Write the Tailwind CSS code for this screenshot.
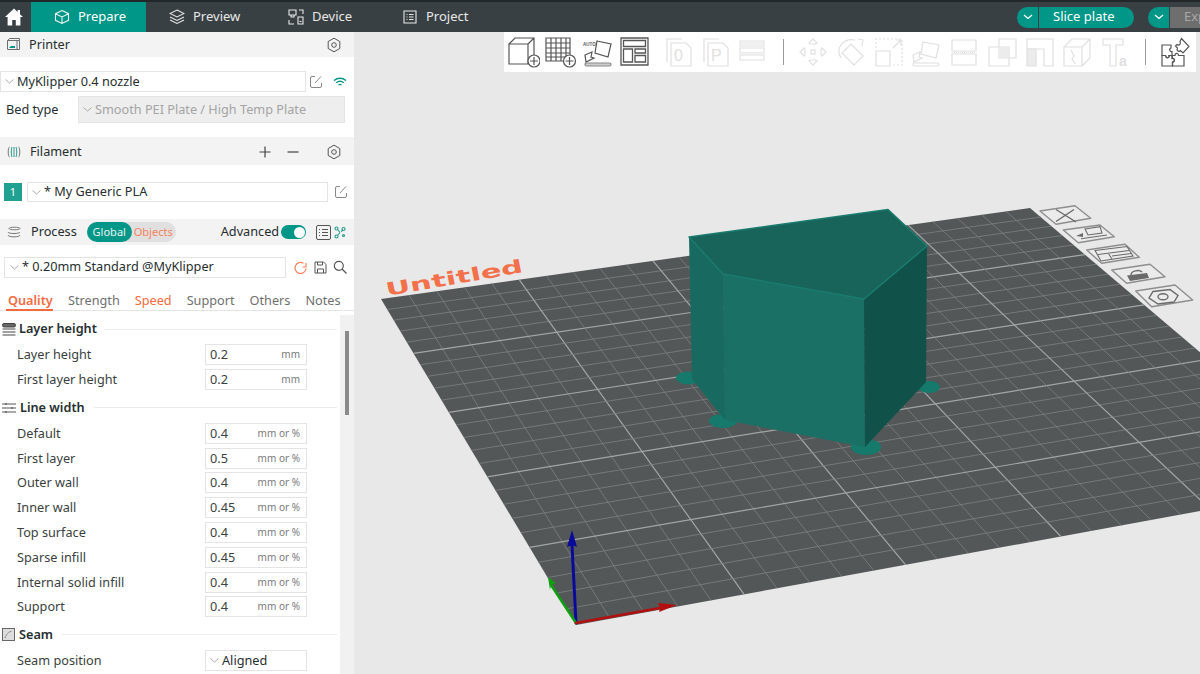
<!DOCTYPE html>
<html>
<head>
<meta charset="utf-8">
<script src="https://cdn.jsdelivr.net/npm/@tailwindcss/browser@4"></script>
</head>
<body class="m-0 overflow-hidden">
<div class="w-[1200px] h-[674px] flex flex-col overflow-hidden font-['Noto_Sans',sans-serif] text-[#262e30] bg-[#e8e8e8]">
  <!-- top bar -->
  <header class="h-[32px] shrink-0 bg-[#394043] border-t-2 border-[#22282a] flex items-center text-[13px] text-[#e8e8e8]">
    <div class="w-[31px] flex justify-center pr-[4px]">
      <svg class="w-[20px] h-[20px]" viewBox="0 0 20 20"><path fill="#fff" d="M10 1.500 1 10h2.600v8.500h4.600v-5.600h3.600v5.600h4.600V10H19l-3-2.800V3h-2.400v2z"/></svg>
    </div>
    <div class="w-[115px] h-full bg-[#009688] flex items-center pl-[23px] gap-[8px] text-white">
      <svg class="w-[16px] h-[16px]" viewBox="0 0 16 16" fill="none" stroke="#e8f5f2" stroke-width="1.100"><path d="M8 1.500 14.500 4.700v6.600L8 14.500 1.500 11.300V4.700zM1.500 4.700 8 8l6.500-3.300M8 8v6.500"/></svg>
      <span>Prepare</span>
    </div>
    <div class="w-[118px] flex items-center pl-[23px] gap-[8px]">
      <svg class="w-[16px] h-[16px]" viewBox="0 0 16 16" fill="none" stroke="#e8e8e8" stroke-width="1.100"><path d="M8 1 15 4.500 8 8 1 4.500zM1 8l7 3.500L15 8M1 11l7 3.500 7-3.500"/></svg>
      <span>Preview</span>
    </div>
    <div class="w-[115px] flex items-center pl-[24px] gap-[8px]">
      <svg class="w-[16px] h-[16px]" viewBox="0 0 16 16" fill="none" stroke="#e8e8e8" stroke-width="1.100"><path d="M1 1h7v5H1zM3 6v2h3V6M10 8h5v7h-5zM11.500 12.500h2M1 11v4h5M11 1h4v4"/></svg>
      <span>Device</span>
    </div>
    <div class="flex items-center pl-[23px] gap-[8px]">
      <svg class="w-[16px] h-[16px]" viewBox="0 0 16 16" fill="none" stroke="#e8e8e8" stroke-width="1.100"><path d="M2 2h12v12H2zM4.500 5.500h1M7 5.500h4.500M4.500 8h1M7 8h4.500M4.500 10.500h1M7 10.500h4.500"/></svg>
      <span>Project</span>
    </div>
    <div class="ml-auto flex items-center h-[21px]">
      <div class="flex h-full w-[117px] rounded-full overflow-hidden bg-[#009688] text-white">
        <div class="w-[22px] flex items-center justify-center border-r border-[#394043]">
          <svg class="w-[10px] h-[6px]" viewBox="0 0 10 6" fill="none" stroke="#fff" stroke-width="1.300"><path d="m1 1 4 3.500L9 1"/></svg>
        </div>
        <div class="flex-1 flex items-center pl-[14px]">Slice plate</div>
      </div>
      <div class="ml-[14px] flex h-full w-[52px] rounded-l-full overflow-hidden">
        <div class="w-[22px] flex items-center justify-center bg-[#009688] border-r border-[#394043]">
          <svg class="w-[10px] h-[6px]" viewBox="0 0 10 6" fill="none" stroke="#fff" stroke-width="1.300"><path d="m1 1 4 3.500L9 1"/></svg>
        </div>
        <div class="flex-1 bg-[#6e6e6e] text-[#a8a8a8] flex items-center pl-[14px] overflow-hidden">Export</div>
      </div>
    </div>
  </header>

  <div class="flex-1 flex min-h-0">
    <!-- sidebar -->
    <aside class="w-[354px] shrink-0 bg-white flex flex-col text-[12.7px] overflow-hidden">
      <div class="h-[25px] bg-[#f3f3f3] flex items-center pl-[6px] pr-[12px]">
        <svg class="w-[15px] h-[15px]" viewBox="0 0 15 15" fill="none" stroke="#6b6f70"><path d="M1.500 3.500h12v9h-12zM1.500 3.500l2-2h10v2M11 3.500v9"/><path fill="#009688" stroke="none" d="M3 11h6V9H5z"/></svg>
        <span class="ml-[8px]">Printer</span>
        <svg class="ml-auto w-[16px] h-[16px]" viewBox="0 0 16 16" fill="none" stroke="#555"><path d="M8 1.200 13.800 4.500v7L8 14.800 2.200 11.500v-7z" stroke-linejoin="round"/><circle cx="8" cy="8" r="2.300"/></svg>
      </div>
      <div class="h-[80px] relative">
        <div class="flex items-center pt-[14px]">
          <div class="w-[306px] h-[21px] border border-[#e4e4e4] flex items-center pl-[4px] gap-[3px]">
            <svg class="w-[9px] h-[5px]" viewBox="0 0 9 5" fill="none" stroke="#aaa"><path d="m.5.500 4 3.500 4-3.500"/></svg>
            <span>MyKlipper 0.4 nozzle</span>
          </div>
          <svg class="ml-[3px] w-[14px] h-[14px]" viewBox="0 0 14 14" fill="none" stroke="#888"><path d="M6 1.500H3a1.500 1.500 0 0 0-1.500 1.500v8A1.500 1.500 0 0 0 3 12.500h8a1.500 1.500 0 0 0 1.500-1.500V8M6 8l6-6.500"/></svg>
          <svg class="ml-[10px] w-[14px] h-[12px]" viewBox="0 0 14 12" fill="none" stroke="#009688" stroke-width="1.300"><path d="M1 4.500c3.500-3 8.500-3 12 0M3.200 6.800c2.200-1.800 5.400-1.800 7.600 0M5.500 9c1-.8 2-.8 3 0"/></svg>
        </div>
        <div class="flex items-center mt-[4px] pl-[6px]">
          <span class="w-[72px]">Bed type</span>
          <div class="w-[267px] h-[27px] bg-[#eeeeee] border border-[#e4e4e4] flex items-center pl-[4px] gap-[3px] text-[#a4a4a4]">
            <svg class="w-[9px] h-[5px]" viewBox="0 0 9 5" fill="none" stroke="#aaa"><path d="m.5.500 4 3.500 4-3.500"/></svg>
            <span>Smooth PEI Plate / High Temp Plate</span>
          </div>
        </div>
      </div>
      <div class="h-[28px] bg-[#f3f3f3] flex items-center pl-[7px] pr-[12px] pt-[1px]">
        <svg class="w-[14px] h-[14px]" viewBox="0 0 14 14" fill="none" stroke="#777"><path d="M2.500 2C.8 2 .8 12 2.500 12M11.500 2c1.700 0 1.700 10 0 10"/><path stroke="#2a9d8f" d="M5 2C4 4 4 10 5 12M7 2v10M9 2c1 2 1 8 0 10"/></svg>
        <span class="ml-[9px]">Filament</span>
        <svg class="ml-auto w-[12px] h-[12px]" viewBox="0 0 12 12" stroke="#444" stroke-width="1.200"><path d="M6 .5v11M.5 6h11"/></svg>
        <svg class="ml-[16px] w-[12px] h-[12px]" viewBox="0 0 12 12" stroke="#444" stroke-width="1.200"><path d="M.5 6h11"/></svg>
        <svg class="ml-[27px] w-[16px] h-[16px]" viewBox="0 0 16 16" fill="none" stroke="#555"><path d="M8 1.200 13.800 4.500v7L8 14.800 2.200 11.500v-7z" stroke-linejoin="round"/><circle cx="8" cy="8" r="2.300"/></svg>
      </div>
      <div class="h-[54px] flex items-center pl-[4px]">
        <div class="w-[18px] h-[18px] bg-[#21a191] text-white text-[11px] flex items-center justify-center">1</div>
        <div class="ml-[5px] w-[301px] h-[20px] border border-[#e4e4e4] flex items-center pl-[4px] gap-[3px]">
          <svg class="w-[9px] h-[5px]" viewBox="0 0 9 5" fill="none" stroke="#aaa"><path d="m.5.500 4 3.500 4-3.500"/></svg>
          <span>* My Generic PLA</span>
        </div>
        <svg class="ml-[6px] w-[14px] h-[14px]" viewBox="0 0 14 14" fill="none" stroke="#888"><path d="M6 1.500H3a1.500 1.500 0 0 0-1.500 1.500v8A1.500 1.500 0 0 0 3 12.500h8a1.500 1.500 0 0 0 1.500-1.500V8M6 8l6-6.500"/></svg>
      </div>
      <div class="h-[26px] bg-[#f3f3f3] flex items-center pl-[7px]">
        <svg class="w-[15px] h-[14px]" viewBox="0 0 15 14" fill="none" stroke="#777"><path d="M2 3.500C2 1.800 13 1.800 13 3.500S2 5.200 2 3.500M1 7c0 2 12 2 12 0M1 10c0 2.500 12 2.500 12 0"/></svg>
        <span class="ml-[9px]">Process</span>
        <div class="ml-[10px] w-[89px] h-[20px] bg-[#e0e0e0] rounded-full flex items-center text-[11px] shrink-0">
          <div class="w-[45px] h-full rounded-full bg-[#009688] text-[#e8f5f2] flex items-center justify-center">Global</div>
          <span class="ml-[2px] text-[#f4825c]">Objects</span>
        </div>
        <span class="ml-[45px]">Advanced</span>
        <div class="ml-[2px] w-[25px] h-[14px] rounded-full bg-[#009688] flex items-center justify-end pr-[1px]"><div class="w-[11px] h-[11px] rounded-full bg-white"></div></div>
        <svg class="ml-[10px] w-[15px] h-[15px]" viewBox="0 0 15 15" fill="none" stroke="#555"><rect x=".5" y=".5" width="14" height="14" rx="1.500"/><path d="M3 4.500h1M6 4.500h6M3 7.500h1M6 7.500h6M3 10.500h1M6 10.500h6"/></svg>
        <svg class="ml-[3px] w-[12px] h-[13px]" viewBox="0 0 12 13" fill="none" stroke="#2a9d8f" stroke-width="1.200"><circle cx="2.500" cy="2.500" r="1.500"/><circle cx="9.500" cy="3" r="1.500"/><circle cx="2.500" cy="10.500" r="1.500"/><circle cx="9.500" cy="9.500" r="1"/><path d="M4 4l2 2.500M6 6.500 4 9M7 5.500l2-1.500"/></svg>
      </div>
      <div class="h-[43px] flex items-center pl-[4px] pt-[1px]">
        <div class="w-[282px] h-[21px] border border-[#e4e4e4] flex items-center pl-[5px] gap-[3px]">
          <svg class="w-[9px] h-[5px]" viewBox="0 0 9 5" fill="none" stroke="#aaa"><path d="m.5.500 4 3.500 4-3.500"/></svg>
          <span>* 0.20mm Standard @MyKlipper</span>
        </div>
        <svg class="ml-[8px] w-[13px] h-[13px]" viewBox="0 0 13 13" fill="none" stroke="#f4825c" stroke-width="1.200"><path d="M12 7.500A5.500 5.500 0 1 1 9.500 2.300M12 2v4H8.500"/></svg>
        <svg class="ml-[7px] w-[13px] h-[13px]" viewBox="0 0 13 13" fill="none" stroke="#555"><path d="M1 1h8.500L12 3.500V12H1zM3.500 1v3h5V1M3.500 12V8h6v4"/></svg>
        <svg class="ml-[6px] w-[14px] h-[14px]" viewBox="0 0 14 14" fill="none" stroke="#555" stroke-width="1.200"><circle cx="5.800" cy="5.800" r="4.500"/><path d="m9 9 4.500 4.500"/></svg>
      </div>
      <div class="h-[23px] shrink-0 flex gap-[15px] border-b border-[#e4e4e4] pl-[6px] pt-[3px] text-[#6f6f6f]">
        <div class="w-[47px] h-[20px] border-b-2 border-[#f26a3d] text-[#f26a3d] font-semibold pl-[2px]">Quality</div>
        <span>Strength</span>
        <span class="text-[#f26a3d]">Speed</span>
        <span>Support</span>
        <span>Others</span>
        <span>Notes</span>
      </div>
      <div class="flex-1 flex min-h-0">
        <div class="w-[340px] flex flex-col overflow-hidden pl-[2px] pr-[3px] pt-[6px] text-[#3a3f40]">
          <div class="h-[24px] shrink-0 flex items-center gap-[3px]">
            <svg class="w-[14px] h-[13px]" viewBox="0 0 14 13" fill="#666" stroke="#444"><rect x=".5" y=".5" width="13" height="3.500" rx="1.500"/><path d="M.5 6h13M.5 9h13M.5 12h13"/></svg>
            <span class="font-semibold text-[#262e30]">Layer height</span>
            <div class="ml-[5px] flex-1 h-px bg-[#ececec]"></div>
          </div>
          <div class="h-[25px] mt-[1px] shrink-0 flex items-center pl-[15px]"><span class="w-[188px]">Layer height</span><div class="w-[102px] h-[21px] border border-[#e4e4e4] flex items-center pl-[4px] pr-[6px] justify-between"><span>0.2</span><span class="text-[10px] text-[#7a7a7a]">mm</span></div></div>
          <div class="h-[25px] shrink-0 flex items-center pl-[15px]"><span class="w-[188px]">First layer height</span><div class="w-[102px] h-[21px] border border-[#e4e4e4] flex items-center pl-[4px] pr-[6px] justify-between"><span>0.2</span><span class="text-[10px] text-[#7a7a7a]">mm</span></div></div>
          <div class="h-[27px] shrink-0 flex items-center gap-[4px] mt-[2px]">
            <svg class="w-[14px] h-[10px]" viewBox="0 0 14 10" stroke="#555" stroke-width="1.200"><path d="M0 1h14M0 5h14M0 9h14M4 0v2M10 4v2M4 8v2"/></svg>
            <span class="font-semibold text-[#262e30]">Line width</span>
            <div class="ml-[5px] flex-1 h-px bg-[#ececec]"></div>
          </div>
          <div class="h-[24.800px] shrink-0 flex items-center pl-[15px]"><span class="w-[188px]">Default</span><div class="w-[102px] h-[21px] border border-[#e4e4e4] flex items-center pl-[4px] pr-[6px] justify-between"><span>0.4</span><span class="text-[10px] text-[#7a7a7a]">mm or %</span></div></div>
          <div class="h-[24.800px] shrink-0 flex items-center pl-[15px]"><span class="w-[188px]">First layer</span><div class="w-[102px] h-[21px] border border-[#e4e4e4] flex items-center pl-[4px] pr-[6px] justify-between"><span>0.5</span><span class="text-[10px] text-[#7a7a7a]">mm or %</span></div></div>
          <div class="h-[24.800px] shrink-0 flex items-center pl-[15px]"><span class="w-[188px]">Outer wall</span><div class="w-[102px] h-[21px] border border-[#e4e4e4] flex items-center pl-[4px] pr-[6px] justify-between"><span>0.4</span><span class="text-[10px] text-[#7a7a7a]">mm or %</span></div></div>
          <div class="h-[24.800px] shrink-0 flex items-center pl-[15px]"><span class="w-[188px]">Inner wall</span><div class="w-[102px] h-[21px] border border-[#e4e4e4] flex items-center pl-[4px] pr-[6px] justify-between"><span>0.45</span><span class="text-[10px] text-[#7a7a7a]">mm or %</span></div></div>
          <div class="h-[24.800px] shrink-0 flex items-center pl-[15px]"><span class="w-[188px]">Top surface</span><div class="w-[102px] h-[21px] border border-[#e4e4e4] flex items-center pl-[4px] pr-[6px] justify-between"><span>0.4</span><span class="text-[10px] text-[#7a7a7a]">mm or %</span></div></div>
          <div class="h-[24.800px] shrink-0 flex items-center pl-[15px]"><span class="w-[188px]">Sparse infill</span><div class="w-[102px] h-[21px] border border-[#e4e4e4] flex items-center pl-[4px] pr-[6px] justify-between"><span>0.45</span><span class="text-[10px] text-[#7a7a7a]">mm or %</span></div></div>
          <div class="h-[24.800px] shrink-0 flex items-center pl-[15px]"><span class="w-[188px]">Internal solid infill</span><div class="w-[102px] h-[21px] border border-[#e4e4e4] flex items-center pl-[4px] pr-[6px] justify-between"><span>0.4</span><span class="text-[10px] text-[#7a7a7a]">mm or %</span></div></div>
          <div class="h-[24.800px] shrink-0 flex items-center pl-[15px]"><span class="w-[188px]">Support</span><div class="w-[102px] h-[21px] border border-[#e4e4e4] flex items-center pl-[4px] pr-[6px] justify-between"><span>0.4</span><span class="text-[10px] text-[#7a7a7a]">mm or %</span></div></div>
          <div class="h-[27px] shrink-0 flex items-center gap-[4px] mt-[2px]">
            <svg class="w-[13px] h-[13px]" viewBox="0 0 13 13" fill="#ddd" stroke="#666"><rect x=".5" y=".5" width="12" height="12"/><path stroke-dasharray="1.500 1" d="M3 10c1-3 3-6 7-7"/></svg>
            <span class="font-semibold text-[#262e30]">Seam</span>
            <div class="ml-[5px] flex-1 h-px bg-[#ececec]"></div>
          </div>
          <div class="h-[24.800px] shrink-0 flex items-center pl-[15px]"><span class="w-[188px]">Seam position</span><div class="w-[102px] h-[21px] border border-[#e4e4e4] flex items-center pl-[4px] gap-[3px] text-[#262e30]"><svg class="w-[9px] h-[5px]" viewBox="0 0 9 5" fill="none" stroke="#aaa"><path d="m.5.500 4 3.500 4-3.500"/></svg><span>Aligned</span></div></div>
        </div>
        <div class="w-[14px] bg-[#f1f1f1] pl-[5px] pt-[16px] mt-[4px]"><div class="w-[4px] h-[84px] bg-[#8a8a8a]"></div></div>
      </div>
    </aside>

    <!-- 3D view -->
    <main class="relative flex-1 overflow-hidden bg-[#e8e8e8]">
      <svg id="scene" class="absolute inset-0 w-[846px] h-[642px]" viewBox="354 32 846 642">
        <polygon fill="#535757" points="381,299 1030,208 1354,483 576,625"/>
        <g id="grid"></g>
        <text transform="matrix(1.430 -0.250 0.170 0.850 387 296)" font-family="DejaVu Sans" font-weight="700" font-size="21" fill="#f2704a">Untitled</text>
        <!-- brims -->
        <g fill="#157a6c">
          <ellipse cx="688" cy="378" rx="12" ry="6.500"/>
          <ellipse cx="723" cy="421" rx="14" ry="7"/>
          <ellipse cx="866" cy="447" rx="15" ry="8"/>
          <ellipse cx="929" cy="387" rx="11" ry="6"/>
        </g>
        <!-- model -->
        <polygon fill="#186a60" points="689,237 723,274 725,420 692,379"/>
        <polygon fill="#1b7066" points="723,274 864,299 865,447 725,420"/>
        <polygon fill="#10524a" points="864,299 927,246 926,382 865,447"/>
        <polygon fill="#18645b" stroke="#1a7b6e" stroke-width="1.500" stroke-linejoin="round" points="689,237 888,209.500 927,246 864,299 723,274"/>
        <!-- axes -->
        <g fill="none" stroke-linecap="round">
          <path d="M576 623 572 545" stroke="#0a0a9a" stroke-width="3"/>
          <path d="M576 623 551 585" stroke="#0da00d" stroke-width="2.500"/>
          <path d="M576 623 660 608" stroke="#b30f0f" stroke-width="2.500"/>
        </g>
        <polygon fill="#0a0a9a" points="572,530 577,547 572,545 567,547"/>
        <polygon fill="#0da00d" points="548,577 556,583 551,585 550,590"/>
        <polygon fill="#b30f0f" points="677,605 659,612 660,608 658,603"/>
        <!-- plate buttons -->
        <g fill="#ebebeb" stroke="#8e8e8e" stroke-width="1.400" stroke-linejoin="round">
          <polygon points="1040,211 1075,205.700 1090.700,218.300 1056,224.300"/>
          <polygon points="1063.300,230 1100,225 1114.300,236.700 1078.300,242.700"/>
          <polygon points="1086.700,250 1125,244.300 1139.300,257.300 1101.700,263.300"/>
          <polygon points="1111.700,270 1150,264.300 1165,276.700 1126.700,283.300"/>
          <polygon points="1135.700,291 1175,285 1192.700,300 1151.700,306.700"/>
        </g>
        <g fill="none" stroke="#6a6a6a" stroke-width="1.400">
          <path d="M1056 209.500 1076 222M1074 209.500 1056 221.500"/>
          <path d="M1085 229l15-2.300 2 6.300-14 2zM1081 238.700 1107 235" stroke-width="1.100"/>
          <path d="M1095 250.500l32-4 6 9.500-32 5zM1098 254.500l31-4M1108 253l4 6M1112 256l19-2.500" stroke-width="1.100"/>
          <path d="M1131 275c0-4 8-6 11-3"/>
          <path d="M1153 291.500l17-2 8 6-4 6.500-16 2-9-6z"/>
          <ellipse cx="1163" cy="296.700" rx="5" ry="3"/>
        </g>
        <polygon fill="#6a6a6a" points="1076,236 1083,233 1083,237"/>
        <polygon fill="#6a6a6a" points="1127,275.500 1147,273 1149,278 1130,281"/>
      </svg>
      <!-- toolbar -->
      <div class="absolute left-[150px] top-0 w-[692px] h-[40px] bg-white flex items-center pl-[4px]">
        <svg class="w-[32px] h-[32px]" viewBox="0 0 32 32" fill="none" stroke="#555" stroke-width="1.200"><path d="M1 8h19v20H1zM1 8l6-6h19v19l-6 6M20 8l6-6"/><circle cx="26" cy="25" r="6" fill="#fff"/><path d="M26 21v8M22 25h8"/></svg>
        <svg class="ml-[5px] w-[32px] h-[32px]" viewBox="0 0 32 32" fill="none" stroke="#555" stroke-width="1.200"><path d="M1 2h24v23H1zM6 2v23M11 2v23M16 2v23M21 2v23M1 7h24M1 12h24M1 17h24M1 21h24"/><circle cx="24.500" cy="25" r="6" fill="#fff"/><path d="M24.500 21v8M20.500 25h8"/></svg>
        <svg class="ml-[5px] w-[32px] h-[32px]" viewBox="0 0 32 32" fill="none" stroke="#555" stroke-width="1.200"><path d="M15 5 29 8l-3 13-13-4z"/><path d="M3 19l7-3-1 5 3 1-8 4z"/><rect x="3" y="27" width="26" height="3" rx="1.500" fill="#ccc" stroke="#888"/><text x="1" y="10" font-family="Liberation Sans" font-size="4.500" font-weight="700" fill="#555" stroke="none">AUTO</text></svg>
        <svg class="ml-[5px] w-[32px] h-[32px]" viewBox="0 0 32 32" fill="none" stroke="#555" stroke-width="1.300"><path d="M2 2h27v27H2zM4.500 4.500h22v6h-22zM4.500 13h9v13h-9zM16 13h10.500v4H16zM16 19.500h10.500v6.500H16z"/></svg>
        <svg class="ml-[11px] w-[32px] h-[32px]" viewBox="0 0 32 32" fill="none" stroke="#e0e0e0" stroke-width="1.200"><path d="M5 26V3h15M9 30V7h15l5 5v18z"/><text x="12" y="25" font-family="Liberation Sans" font-size="16" fill="#e0e0e0" stroke="none">0</text></svg>
        <svg class="ml-[5px] w-[32px] h-[32px]" viewBox="0 0 32 32" fill="none" stroke="#e0e0e0" stroke-width="1.200"><path d="M5 26V3h15M9 30V7h15l5 5v18z"/><text x="12" y="25" font-family="Liberation Sans" font-size="16" fill="#e0e0e0" stroke="none">P</text></svg>
        <svg class="ml-[5px] w-[32px] h-[32px]" viewBox="0 0 32 32" fill="none" stroke="#e0e0e0" stroke-width="1.200"><path d="M4 5h24v5H4zM4 12h24v5H4zM4 19h24v5H4z"/><path d="M4 6h24v3H4z" fill="#f0f0f0" stroke="none"/></svg>
        <div class="ml-[15px] w-px h-[26px] bg-[#9a9a9a]"></div>
        <svg class="ml-[13px] w-[32px] h-[32px]" viewBox="0 0 32 32" fill="none" stroke="#e0e0e0" stroke-width="1.200"><path d="M12 7l4-4 4 4-2 1h-4zM12 25l4 4 4-4-2-1h-4zM7 12l-4 4 4 4 1-2v-4zM25 12l4 4-4 4-1-2v-4z"/><rect x="14" y="14" width="4" height="4"/></svg>
        <svg class="ml-[5.750px] w-[32px] h-[32px]" viewBox="0 0 32 32" fill="none" stroke="#e0e0e0" stroke-width="1.200"><path d="M6 22C0 12 8 2 20 4M16 8l12 12-9 9L7 17zM23 3l5 1-1 6"/></svg>
        <svg class="ml-[5.750px] w-[32px] h-[32px]" viewBox="0 0 32 32" fill="none" stroke="#e0e0e0" stroke-width="1.200"><path d="M3 15h14v15H3z"/><path stroke-dasharray="2 2" d="M3 12V3h26v26h-9"/><path d="M20 12l8-8M23 4h5v5"/></svg>
        <svg class="ml-[5.750px] w-[32px] h-[32px]" viewBox="0 0 32 32" fill="none" stroke="#e0e0e0" stroke-width="1.200"><path d="M13 6 29 9l-3 13-15-4zM3 19l7-3-1 5 3 1-8 4z"/><rect x="3" y="27" width="26" height="3" rx="1.500"/></svg>
        <svg class="ml-[5.750px] w-[32px] h-[32px]" viewBox="0 0 32 32" fill="none" stroke="#e0e0e0" stroke-width="1.200"><path d="M4 4h24v11H4zM4 18h24v11H4z"/><path stroke-dasharray="1 1" d="M4 16.500h24"/></svg>
        <svg class="ml-[5.750px] w-[32px] h-[32px]" viewBox="0 0 32 32" fill="none" stroke="#e0e0e0" stroke-width="1.200"><path d="M3 11h20v19H3zM13 3h17v19H13z"/><path d="M13 11h10v11H13z" fill="#ececec" stroke="none"/></svg>
        <svg class="ml-[5.750px] w-[32px] h-[32px]" viewBox="0 0 32 32" fill="none" stroke="#e0e0e0" stroke-width="1.200"><path d="M3 3h26v27h-9V13H3z"/><path d="M3 13h9v17H3z" fill="#ececec"/></svg>
        <svg class="ml-[5.750px] w-[32px] h-[32px]" viewBox="0 0 32 32" fill="none" stroke="#e0e0e0" stroke-width="1.200"><path d="M3 11h18v19H3zM3 11l8-8h18v19l-8 8M21 11l8-8M10 14l3 6-2 3 3 5"/></svg>
        <svg class="ml-[5.750px] w-[32px] h-[32px]" viewBox="0 0 32 32" fill="none" stroke="#e0e0e0" stroke-width="1.200"><path d="M4 3h20v6h-7v21h-6V9H4z"/><text x="20" y="30" font-family="Liberation Sans" font-weight="700" font-size="14" fill="#e0e0e0" stroke="none">a</text></svg>
        <div class="ml-[14px] w-px h-[26px] bg-[#9a9a9a]"></div>
        <svg class="ml-[12px] w-[32px] h-[32px]" viewBox="0 0 32 32" fill="none" stroke="#555" stroke-width="1.200"><path d="M4 9h9v3c-2.500 1-1 4 1 3.500v4h-3c1 2.500-3 3.500-3.500 0H4z"/><path d="M4 19.500h3.500c.5 3 4.500 2.500 3.500 0h3v3c2.500-1 3.500 3.500.5 3.500V30H4z"/><path d="M14 19.500h3c-.5-2.500 3.500-3 3.500 0H26V30H14.500v-4c3 0 2-4.500 0-3.500z"/><path d="M23.500 2.500 31 10.500l-6 6.500-2.500-2.500c-2 2-4.500-.5-3-2.500l-2-2 1.500-1.500c2 1.500 4.500-.5 3-3z"/></svg>
      </div>
    </main>
  </div>
</div>
<script>
(function () {
  var src = [[381,299],[1030,208],[1354,483],[576,625]];
  var x0=src[0][0],y0=src[0][1],x1=src[1][0],y1=src[1][1],x2=src[2][0],y2=src[2][1],x3=src[3][0],y3=src[3][1];
  var dx1=x1-x2,dx2=x3-x2,dx3=x0-x1+x2-x3,dy1=y1-y2,dy2=y3-y2,dy3=y0-y1+y2-y3;
  var den=dx1*dy2-dx2*dy1;
  var g=(dx3*dy2-dx2*dy3)/den,h=(dx1*dy3-dx3*dy1)/den;
  var a=x1-x0+g*x1,b=x3-x0+h*x3,c=x0,d=y1-y0+g*y1,e=y3-y0+h*y3,f=y0;
  function P(u,v){var w=g*u+h*v+1;return [(a*u+b*v+c)/w,(d*u+e*v+f)/w];}
  var svg='',N=25;
  for(var i=1;i<N;i++){
    var t=i/N,major=i%5===0,col=major?'#a3a6a6':'#7e8181',sw=major?1.2:0.8;
    var A=P(t,0),B=P(t,1),C=P(0,t),D=P(1,t);
    svg+='<line x1="'+A[0]+'" y1="'+A[1]+'" x2="'+B[0]+'" y2="'+B[1]+'" stroke="'+col+'" stroke-width="'+sw+'"/>';
    svg+='<line x1="'+C[0]+'" y1="'+C[1]+'" x2="'+D[0]+'" y2="'+D[1]+'" stroke="'+col+'" stroke-width="'+sw+'"/>';
  }
  document.getElementById('grid').innerHTML=svg;
})();
</script>
</body>
</html>
